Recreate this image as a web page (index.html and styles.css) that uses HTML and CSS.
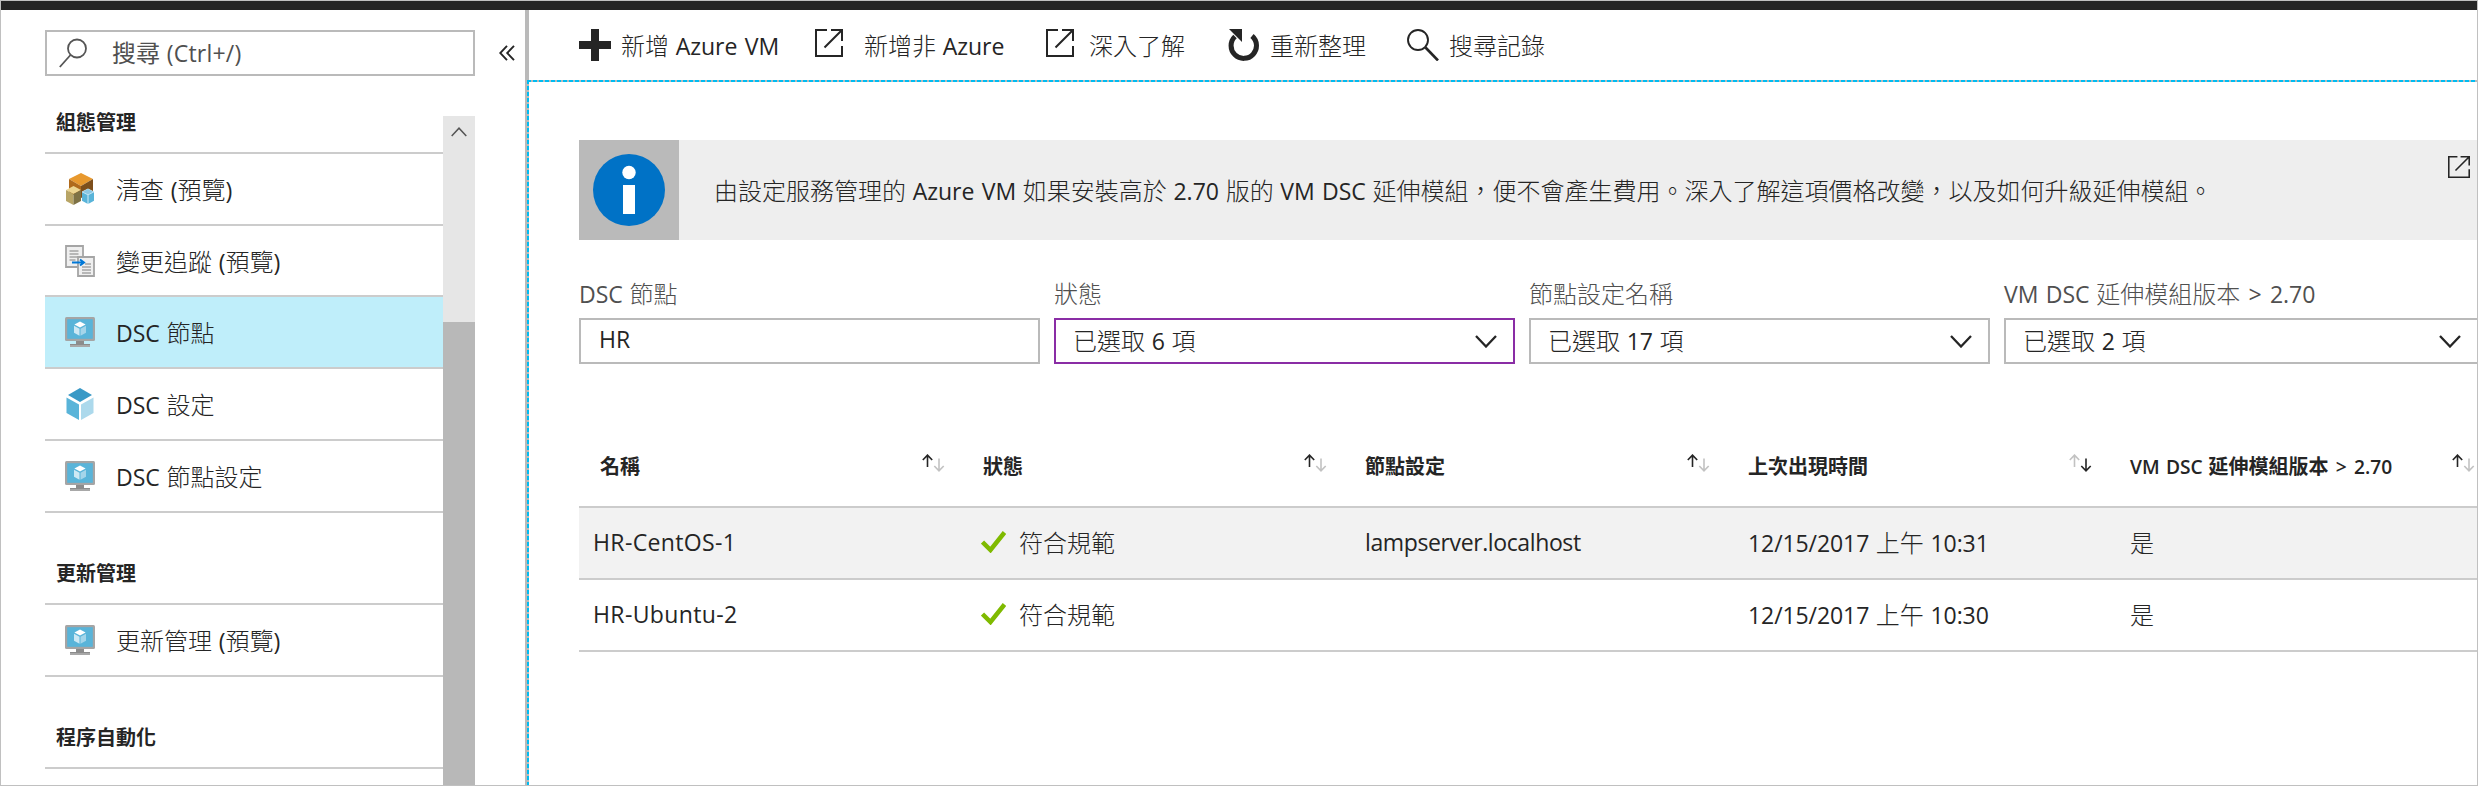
FILE: index.html
```html
<!DOCTYPE html>
<html lang="zh-Hant">
<head>
<meta charset="utf-8">
<title>DSC 節點</title>
<link rel="stylesheet" href="styles.css">
</head>
<body>
<svg class="defs" width="0" height="0">
  <symbol id="monitor" viewBox="0 0 30 30">
    <rect x="0" y="0" width="30" height="24" rx="1.5" fill="#a5a5a5"/>
    <rect x="2.2" y="2.2" width="25.6" height="19.6" fill="#59b4d9"/>
    <path d="M11 24h8v3h6v3H5v-3h6z" fill="#8c8c8c"/><path d="M5 28h20v2H5z" fill="#a8a8a8"/>
    <path d="M15 4.500l5.600 3-5.600 3-5.600-3z" fill="#fff"/>
    <path d="M9 8.800l5.500 3v7L9 15.800z" fill="#cde8f4"/><path d="M21 8.800l-5.500 3v7l5.500-3z" fill="#a4d5ea"/>
  </symbol>
  <symbol id="ext" viewBox="0 0 28 28">
    <path d="M12 1H1v26h26V17M16 1h11v11M27 1L9.500 18.500" fill="none" stroke="currentColor" stroke-width="2"/>
  </symbol>
  <symbol id="caret" viewBox="0 0 22 13"><path d="M1 1l10 10.500L21 1" fill="none" stroke="currentColor" stroke-width="2.300"/></symbol>
  <symbol id="sort" viewBox="0 0 24 18">
    <path class="up" d="M5.500 13V1M.8 6l4.700-4.900L10.200 6"/><path class="down" d="M17 4.500v12M12.300 12l4.700 4.800 4.700-4.800"/>
  </symbol>
  <symbol id="check" viewBox="0 0 25 22"><path d="M1.500 11l8 8L23.500 1.500" fill="none" stroke="#7fba00" stroke-width="4.500"/></symbol>
</svg>
<div class="frame">
  <div class="topbar"></div>
  <div class="shell">
    <aside class="sidebar">
      <div class="search-row">
        <div class="search">
          <svg class="search-icon" width="28" height="30" viewBox="0 0 28 30" fill="none" stroke="#555" stroke-width="1.800"><circle cx="18" cy="10.500" r="9"/><path d="M11.500 17L.8 29"/></svg>
          <span class="search-text">搜尋 <span class="lat hint">(Ctrl+/)</span></span>
        </div>
        <svg class="collapse" width="16" height="16" viewBox="0 0 16 16" fill="none" stroke="#252525" stroke-width="1.900"><path d="M8 .8L1.200 8 8 15.200M15 .8L8.200 8l6.800 7.200"/></svg>
      </div>
      <div class="menu-wrap">
        <nav class="menu">
          <h2 class="group first">組態管理</h2>
          <a class="item"><svg width="30" height="32" viewBox="0 0 30 32">
            <path d="M16 0l12 6-12 7L4 6z" fill="#e8992e"/><path d="M4 6l12 7v12L4 20z" fill="#b06a1c"/><path d="M28 6l-12 7v12l12-6z" fill="#7d4f1c"/>
            <path d="M8.500 13L16 17l-7.500 4L1 17z" fill="#ecd591"/><path d="M1 17l7.500 4v11L1 28z" fill="#b8a566"/><path d="M16 17l-7.500 4v11l7.500-4z" fill="#7e7245"/>
            <path d="M23 15.500l6 3v9L23 31l-6-3.500v-9z" fill="#d5ecf7"/>
            <path d="M23 16l5.500 2.700-5.500 2.800-5.500-2.800z" fill="#8cc8e4"/><path d="M17 19.200l5.500 2.800v8.800L17 27.800z" fill="#59b4d9"/><path d="M29 19.200L23.500 22v8.800l5.500-3z" fill="#59b4d9"/>
          </svg><span>清查 <span class="lat">(</span>預覽<span class="lat">)</span></span></a>
          <a class="item short"><svg width="30" height="32" viewBox="0 0 30 32">
            <path d="M1 1h17v21H1z" fill="#efefef" stroke="#a5a5a5" stroke-width="1.800"/><path d="M4.500 6h9M4.500 9h9M4.500 12h9M4.500 15h6" stroke="#a5a5a5" stroke-width="1.500"/>
            <path d="M13 12h16v19H13z" fill="#efefef" stroke="#a5a5a5" stroke-width="1.800"/><path d="M20 19h6M17 22h9M17 25h9M17 28h9" stroke="#a5a5a5" stroke-width="1.500"/>
            <path d="M7 17.500h11M15 14.500l4 3-4 3" fill="none" stroke="#0078d7" stroke-width="2"/>
          </svg><span>變更追蹤 <span class="lat">(</span>預覽<span class="lat">)</span></span></a>
          <a class="item active"><svg width="30" height="30"><use href="#monitor"/></svg><span><span class="lat">DSC</span> 節點</span></a>
          <a class="item"><svg width="30" height="32" viewBox="0 0 30 32">
            <path d="M15 0l12 7-12 7L3 7z" fill="#3999c6"/><path d="M1.500 9.500L14 16.500V32L1.500 25z" fill="#59b4d9"/><path d="M28.500 9.500L16 16.500V32l12.500-7z" fill="#acd9ec"/>
          </svg><span><span class="lat">DSC</span> 設定</span></a>
          <a class="item"><svg width="30" height="30"><use href="#monitor"/></svg><span><span class="lat">DSC</span> 節點設定</span></a>
          <h2 class="group">更新管理</h2>
          <a class="item"><svg width="30" height="30"><use href="#monitor"/></svg><span>更新管理 <span class="lat">(</span>預覽<span class="lat">)</span></span></a>
          <h2 class="group">程序自動化</h2>
        </nav>
        <div class="scrollbar">
          <svg width="16" height="10" viewBox="0 0 16 10" fill="none" stroke="#555" stroke-width="1.500"><path d="M.7 9L8 1.200 15.300 9"/></svg>
          <div class="thumb"></div>
        </div>
      </div>
    </aside>
    <main class="main">
      <div class="toolbar">
        <a class="tool t1"><svg width="32" height="32" viewBox="0 0 32 32"><path d="M12 0h8v12h12v8H20v12h-8V20H0v-8h12z" fill="#252525"/></svg><span>新增 <span class="lat">Azure VM</span></span></a>
        <a class="tool t2"><svg width="28" height="28"><use href="#ext"/></svg><span>新增非 <span class="lat">Azure</span></span></a>
        <a class="tool t3"><svg width="28" height="28"><use href="#ext"/></svg><span>深入了解</span></a>
        <a class="tool t4"><svg width="31" height="32" viewBox="0 0 31 32"><path d="M7 7.500A12.700 12.700 0 1 0 24 7" fill="none" stroke="#252525" stroke-width="5"/><path d="M1 0h13v13z" fill="#252525"/></svg><span>重新整理</span></a>
        <a class="tool t5"><svg width="32" height="32" viewBox="0 0 32 32" fill="none" stroke="#252525"><circle cx="11" cy="11" r="10" stroke-width="1.900"/><path d="M18.500 18.500L31 31.500" stroke-width="2.600"/></svg><span>搜尋記錄</span></a>
      </div>
      <div class="content">
        <div class="banner">
          <div class="info"><svg width="72" height="72" viewBox="0 0 72 72"><circle cx="36" cy="36" r="36" fill="#0072c6"/><circle cx="36" cy="18.500" r="6.700" fill="#fff"/><path d="M30 31h12v29H30z" fill="#fff"/></svg></div>
          <p class="banner-text">由設定服務管理的 <span class="lat">Azure VM</span> 如果安裝高於 <span class="lat">2.70</span> 版的 <span class="lat">VM DSC</span> 延伸模組，便不會產生費用。深入了解這項價格改變，以及如何升級延伸模組。</p>
          <svg class="banner-ext" width="22" height="22"><use href="#ext"/></svg>
        </div>
        <div class="filters">
          <label class="filter"><span class="label"><span class="lat">DSC</span> 節點</span><span class="box text"><span class="lat">HR</span></span></label>
          <label class="filter"><span class="label">狀態</span><span class="box focus"><span>已選取 <span class="lat">6</span> 項</span><svg width="22" height="13"><use href="#caret"/></svg></span></label>
          <label class="filter"><span class="label">節點設定名稱</span><span class="box"><span>已選取 <span class="lat">17</span> 項</span><svg width="22" height="13"><use href="#caret"/></svg></span></label>
          <label class="filter wide"><span class="label"><span class="lat">VM DSC</span> 延伸模組版本 <span class="lat gt">&gt;</span> <span class="lat">2.70</span></span><span class="box"><span>已選取 <span class="lat">2</span> 項</span><svg width="22" height="13"><use href="#caret"/></svg></span></label>
        </div>
        <div class="table">
          <div class="row head">
            <span class="cell">名稱<svg class="sort" width="24" height="18"><use href="#sort"/></svg></span>
            <span class="cell">狀態<svg class="sort" width="24" height="18"><use href="#sort"/></svg></span>
            <span class="cell">節點設定<svg class="sort" width="24" height="18"><use href="#sort"/></svg></span>
            <span class="cell">上次出現時間<svg class="sort desc" width="24" height="18"><use href="#sort"/></svg></span>
            <span class="cell"><span><span class="lat">VM DSC</span> 延伸模組版本 <span class="lat gt">&gt;</span> <span class="lat">2.70</span></span><svg class="sort" width="24" height="18"><use href="#sort"/></svg></span>
          </div>
          <div class="row shade">
            <span class="cell"><span class="lat name">HR-CentOS-1</span></span>
            <span class="cell status"><svg width="25" height="22"><use href="#check"/></svg>符合規範</span>
            <span class="cell"><span class="lat config">lampserver.localhost</span></span>
            <span class="cell"><span><span class="lat date">12/15/2017</span> 上午 <span class="lat date">10:31</span></span></span>
            <span class="cell">是</span>
          </div>
          <div class="row">
            <span class="cell"><span class="lat name">HR-Ubuntu-2</span></span>
            <span class="cell status"><svg width="25" height="22"><use href="#check"/></svg>符合規範</span>
            <span class="cell"></span>
            <span class="cell"><span><span class="lat date">12/15/2017</span> 上午 <span class="lat date">10:30</span></span></span>
            <span class="cell">是</span>
          </div>
        </div>
      </div>
    </main>
  </div>
</div>
</body>
</html>
```
FILE: styles.css
```css
* { box-sizing: border-box; }
body {
  margin: 0;
  color: #252525;
  background: #fff;
  font-family: "Noto Sans CJK TC", sans-serif;
  font-size: 24px;
  font-weight: 300;
  line-height: 36px;
  white-space: nowrap;
  word-spacing: 0.055em;
}
svg { display: block; flex: none; }
.defs { position: absolute; }
.lat {
  font-family: "Open Sans", "Noto Sans", sans-serif;
  font-size: 0.96em;
  font-weight: 400;
  line-height: 1;
}
.gt { margin: 0 0.07em; }
.hint { letter-spacing: 0.2px; }
.frame {
  display: flex;
  flex-direction: column;
  width: 2478px;
  height: 786px;
  border: 1px solid #c0c0c0;
  overflow: hidden;
}
.topbar { flex: none; height: 9px; background: #252525; }
.shell { display: flex; flex: 1; min-height: 0; }

/* Sidebar */
.sidebar {
  display: flex;
  flex-direction: column;
  flex: none;
  width: 528px;
  padding: 20px 0 0 44px;
  border-right: 4px solid #bababa;
}
.search-row { display: flex; align-items: center; gap: 24px; flex: none; margin-bottom: 40px; }
.search {
  display: flex;
  align-items: center;
  gap: 25px;
  width: 430px;
  height: 46px;
  padding-left: 12px;
  border: 2px solid #bababa;
  color: #505050;
  font-weight: 400;
}
.search-text { padding-bottom: 2px; }
.collapse { margin-top: -1px; }
.menu-wrap { display: flex; flex: 1; min-height: 0; width: 430px; }
.menu { width: 398px; }
.group {
  display: flex;
  align-items: flex-end;
  height: 92px;
  margin: 0;
  padding: 0 0 16px 11px;
  border-bottom: 2px solid #ccc;
  font-size: 20px;
  font-weight: 700;
  line-height: 28px;
}
.group.first { height: 38px; }
.item {
  display: flex;
  align-items: center;
  gap: 21px;
  height: 72px;
  padding-left: 20px;
  border-bottom: 2px solid #ccc;
}
.item.short { height: 71px; }
.active { background: #bfeefa; }
.scrollbar {
  display: flex;
  flex-direction: column;
  align-items: center;
  width: 32px;
  padding-top: 11px;
  background: #e6e6e6;
}
.thumb { width: 32px; flex: 1; margin-top: 185px; background: #b8b8b8; }

/* Main pane: the dashed outline overlaps the sidebar divider */
.main { flex: 1; min-width: 0; display: flex; flex-direction: column; }
.toolbar { display: flex; flex: none; height: 70px; padding: 19px 0 0 50px; }
.tool { display: flex; }
.tool > span { line-height: 31px; }
.t1 { width: 236px; gap: 10px; }
.t2 { width: 231px; gap: 21px; }
.t3 { width: 182px; gap: 15px; }
.t4 { width: 179px; gap: 11px; }
.t5 { gap: 10px; }
.content {
  position: relative;
  flex: 1;
  padding: 60px 0 0 50px;
}
.content::before, .content::after { content: ""; position: absolute; left: -2px; top: 0; }
.content::before { right: 0; height: 2px; background: repeating-linear-gradient(90deg, #00bcf2 0 4px, #bababa 4px 6px); }
.content::after { bottom: 0; width: 2px; background: repeating-linear-gradient(180deg, #00bcf2 0 4px, #bababa 4px 6px); }
.banner { display: flex; height: 100px; background: #eee; }
.info { display: flex; align-items: center; justify-content: center; width: 100px; background: #bababa; }
.banner-text { flex: 1; margin: 32px 0 0 35px; }
.banner-ext { margin: 16px 7px 0 0; }
.filters { display: flex; gap: 14px; margin-top: 35px; }
.filter { display: flex; flex-direction: column; flex: none; width: 461px; }
.filter.wide { width: 475px; }
.label { height: 43px; color: #505050; }
.box {
  display: flex;
  align-items: center;
  justify-content: space-between;
  height: 46px;
  padding: 0 16px 0 17px;
  border: 2px solid #bababa;
}
.box > span { padding-bottom: 2px; }
.box.text { padding-left: 18px; }
.box.focus { border-color: #8a2da5; }

/* Node table */
.table { margin-top: 62px; }
.row {
  display: grid;
  grid-template-columns: 404px 382px 383px 382px 383px;
  height: 72px;
  padding-bottom: 2px;
  border-bottom: 2px solid #ccc;
}
.row.head { height: 82px; padding-bottom: 1px; font-size: 20px; font-weight: 700; }
.cell { display: flex; align-items: center; }
.cell:first-child { padding-left: 14px; }
.name { letter-spacing: 0.35px; padding-top: 2px; }
.config { letter-spacing: -0.4px; padding-top: 2px; }
.date { letter-spacing: -0.1px; }
.shade { background: #f2f2f2; }
.head .cell { justify-content: space-between; padding-right: 37px; }
.head .cell:first-child { padding-left: 21px; }
.head .lat { font-weight: 600; }
.status { gap: 13px; margin-left: -2px; }
.sort { fill: none; stroke-width: 1.600; margin-bottom: 6px; }
.up { stroke: var(--up, #252525); }
.down { stroke: var(--down, #c2c2c2); }
.sort.desc { --up: #c2c2c2; --down: #252525; }
```
